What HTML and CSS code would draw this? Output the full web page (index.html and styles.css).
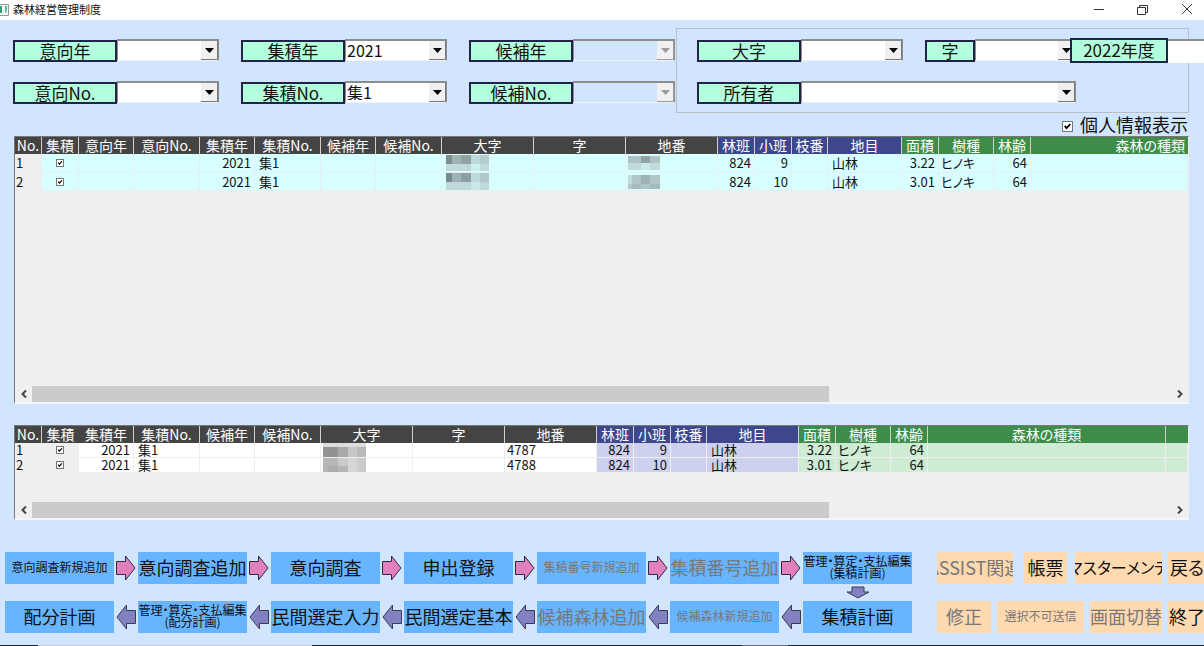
FILE: index.html
```html
<!DOCTYPE html>
<html lang="ja">
<head>
<meta charset="utf-8">
<title>森林経営管理制度</title>
<link rel="stylesheet" href="styles.css">
</head>
<body>
<svg class="defs" aria-hidden="true">
  <symbol id="arrow-right" viewBox="0 0 20 26"><path class="pink" d="M.5 6.500H9.500V1L19 13L9.500 25V19.500H.5Z"/></symbol>
  <symbol id="arrow-left" viewBox="0 0 20 26"><path class="violet" d="M19.500 6.500H10.500V1L1 13L10.500 25V19.500H19.500Z"/></symbol>
</svg>
<div class="app">
  <header class="titlebar">
    <svg class="app-icon" width="9" height="12" viewBox="0 0 9 12"><path d="M0 .5H8.500V11.500H0" fill="#f4f6f6" stroke="#8f9a9a"/><path d="M0 2H2V9H0Z" fill="#3d9c78"/><path d="M5 2H7V5L6 9H5Z" fill="#56b5a0"/></svg>
    <h1 class="title">森林経営管理制度</h1>
    <div class="window-buttons">
      <button type="button" aria-label="最小化"><svg width="12" height="12" viewBox="0 0 12 12"><path d="M1 5.500H11"/></svg></button>
      <button type="button" aria-label="元に戻す"><svg width="12" height="12" viewBox="0 0 12 12"><path d="M.5 3.500H8.500V10.500H.5ZM2.500 3.500V1.500H10.500V8.500H8.500"/></svg></button>
      <button type="button" aria-label="閉じる"><svg width="12" height="12" viewBox="0 0 12 12"><path d="M1 0L11 10M11 0L1 10"/></svg></button>
    </div>
  </header>

  <form class="filters">
    <div class="pair">
      <div class="field"><label for="ik-year">意向年</label><select id="ik-year"><option></option></select></div>
      <div class="field"><label for="ik-no">意向No.</label><select id="ik-no"><option></option></select></div>
    </div>
    <div class="pair">
      <div class="field"><label for="sh-year">集積年</label><select id="sh-year"><option>2021</option></select></div>
      <div class="field"><label for="sh-no">集積No.</label><select id="sh-no"><option>集1</option></select></div>
    </div>
    <div class="pair">
      <div class="field"><label for="kh-year">候補年</label><select id="kh-year" disabled><option></option></select></div>
      <div class="field"><label for="kh-no">候補No.</label><select id="kh-no" disabled><option></option></select></div>
    </div>
    <div class="place">
      <div class="place-row">
        <div class="field"><label for="oaza">大字</label><select id="oaza"><option></option></select></div>
        <div class="field short"><label for="aza">字</label><select id="aza"><option></option></select></div>
      </div>
      <div class="field owner"><label for="owner">所有者</label><select id="owner"><option></option></select></div>
    </div>
    <div class="fiscal"><label for="fiscal">2022年度</label><input id="fiscal" type="text"></div>
  </form>

  <div class="privacy"><input type="checkbox" id="personal" checked><label for="personal">個人情報表示</label></div>

  <section class="grid-panel main-list">
    <table>
      <colgroup><col class="w27"><col class="w37"><col class="w55"><col class="w66"><col class="w55"><col class="w66"><col class="w55"><col class="w66"><col class="w92"><col class="w92"><col class="w92"><col class="w37"><col class="w37"><col class="w36"><col class="w74"><col class="w37"><col class="w55"><col class="w37"><col></colgroup>
      <thead><tr><th>No.</th><th>集積</th><th>意向年</th><th>意向No.</th><th>集積年</th><th>集積No.</th><th>候補年</th><th>候補No.</th><th>大字</th><th>字</th><th>地番</th><th class="blue">林班</th><th class="blue">小班</th><th class="blue">枝番</th><th class="blue">地目</th><th class="green">面積</th><th class="green">樹種</th><th class="green">林齢</th><th class="green end">森林の種類</th></tr></thead>
      <tbody>
        <tr><td class="rowno">1</td><td class="tick"><input type="checkbox" aria-label="集積 1" checked></td><td></td><td></td><td class="num">2021</td><td>集1</td><td></td><td></td>
          <td><svg class="mosaic" width="43" height="16" viewBox="0 0 43 16"><path fill="#b4cccc" d="M0 0H43V9H0Z"/><path fill="#7f8d8d" d="M0 0H6V9H0Z"/><path fill="#9fb3b3" d="M6 0H15V9H6Z"/><path fill="#91a3a3" d="M15 0H25V9H15Z"/><path fill="#bddada" d="M25 0H34V9H25Z"/><path fill="#c0d9da" d="M0 9H43V16H0Z"/><path fill="#cdeeee" d="M25 9H34V16H25Z"/></svg></td>
          <td></td>
          <td class="flush"><svg class="mosaic" width="32" height="14" viewBox="0 0 32 14"><path fill="#aec4c4" d="M0 0H32V7H0Z"/><path fill="#8fa3a2" d="M13 0H22V7H13Z"/><path fill="#c0dada" d="M0 7H32V14H0Z"/><path fill="#cde9ea" d="M13 7H22V14H13Z"/></svg></td>
          <td class="num">824</td><td class="num">9</td><td></td><td>山林</td><td class="num">3.22</td><td class="flush">ヒノキ</td><td class="num">64</td><td></td></tr>
        <tr><td class="rowno">2</td><td class="tick"><input type="checkbox" aria-label="集積 2" checked></td><td></td><td></td><td class="num">2021</td><td>集1</td><td></td><td></td>
          <td><svg class="mosaic" width="43" height="17" viewBox="0 0 43 17"><path fill="#b0c8c8" d="M0 0H43V9H0Z"/><path fill="#7a8a89" d="M0 0H6V9H0Z"/><path fill="#9db2b2" d="M6 0H15V9H6Z"/><path fill="#8da09f" d="M15 0H25V9H15Z"/><path fill="#bddada" d="M25 0H34V9H25Z"/><path fill="#bfd9da" d="M0 9H43V17H0Z"/><path fill="#cae6e6" d="M25 9H34V17H25Z"/></svg></td>
          <td></td>
          <td class="flush"><svg class="mosaic" width="32" height="14" viewBox="0 0 32 14"><path fill="#afc6c6" d="M0 0H32V14H0Z"/><path fill="#c1dcdc" d="M0 0H4V9H0Z"/><path fill="#9eb3b3" d="M13 0H22V9H13Z"/><path fill="#a6bcbc" d="M4 9H13V14H4ZM22 9H32V14H22Z"/></svg></td>
          <td class="num">824</td><td class="num">10</td><td></td><td>山林</td><td class="num">3.01</td><td class="flush">ヒノキ</td><td class="num">64</td><td></td></tr>
      </tbody>
    </table>
    <div class="scrollbar"><button type="button" aria-label="左へ"><svg width="8" height="8" viewBox="0 0 8 8"><path d="M6 .5L2.500 4L6 7.500"/></svg></button><div class="track"><div class="thumb"></div></div><button type="button" aria-label="右へ"><svg width="8" height="8" viewBox="0 0 8 8"><path d="M2 .5L5.500 4L2 7.500"/></svg></button></div>
  </section>

  <section class="grid-panel sub-list">
    <table>
      <colgroup><col class="w27"><col class="w37"><col class="w55"><col class="w66"><col class="w55"><col class="w66"><col class="w92"><col class="w92"><col class="w92"><col class="w37"><col class="w37"><col class="w36"><col class="w92"><col class="w37"><col class="w55"><col class="w37"><col class="w238"><col></colgroup>
      <thead><tr><th>No.</th><th class="open">集積</th><th>集積年</th><th>集積No.</th><th>候補年</th><th>候補No.</th><th>大字</th><th>字</th><th>地番</th><th class="blue">林班</th><th class="blue">小班</th><th class="blue">枝番</th><th class="blue">地目</th><th class="green">面積</th><th class="green">樹種</th><th class="green">林齢</th><th class="green">森林の種類</th><th class="green end"></th></tr></thead>
      <tbody>
        <tr><td class="rowno">1</td><td class="tick"><input type="checkbox" aria-label="集積済 1" checked></td><td class="num">2021</td><td>集1</td><td></td><td></td>
          <td class="flush"><svg class="mosaic" width="43" height="14" viewBox="0 0 43 14"><path fill="#ddd" d="M0 0H43V4H0Z"/><path fill="#a9a9a9" d="M0 4H43V14H0Z"/><path fill="#929292" d="M0 4H15V14H0Z"/><path fill="#c6c6c6" d="M25 4H34V14H25Z"/><path fill="#b9b9b9" d="M34 4H43V14H34Z"/></svg></td>
          <td></td><td class="flush">4787</td><td class="num lilac">824</td><td class="num lilac">9</td><td class="lilac"></td><td class="lilac">山林</td><td class="num mint">3.22</td><td class="mint flush">ヒノキ</td><td class="num mint">64</td><td class="mint"></td><td class="mint"></td></tr>
        <tr><td class="rowno">2</td><td class="tick"><input type="checkbox" aria-label="集積済 2" checked></td><td class="num">2021</td><td>集1</td><td></td><td></td>
          <td class="flush"><svg class="mosaic" width="43" height="14" viewBox="0 0 43 14"><path fill="#b6b6b6" d="M0 0H43V14H0Z"/><path fill="#cbcbcb" d="M15 0H25V8H15ZM34 0H43V14H34Z"/><path fill="#d6d6d6" d="M25 0H34V14H25Z"/><path fill="#adadad" d="M5 8H15V14H5Z"/></svg></td>
          <td></td><td class="flush">4788</td><td class="num lilac">824</td><td class="num lilac">10</td><td class="lilac"></td><td class="lilac">山林</td><td class="num mint">3.01</td><td class="mint flush">ヒノキ</td><td class="num mint">64</td><td class="mint"></td><td class="mint"></td></tr>
      </tbody>
    </table>
    <div class="scrollbar"><button type="button" aria-label="左へ"><svg width="8" height="8" viewBox="0 0 8 8"><path d="M6 .5L2.500 4L6 7.500"/></svg></button><div class="track"><div class="thumb"></div></div><button type="button" aria-label="右へ"><svg width="8" height="8" viewBox="0 0 8 8"><path d="M2 .5L5.500 4L2 7.500"/></svg></button></div>
  </section>

  <footer class="actions">
    <div class="flow">
      <button type="button" class="small">意向調査新規追加</button>
      <svg class="arrow"><use href="#arrow-right"/></svg>
      <button type="button">意向調査追加</button>
      <svg class="arrow"><use href="#arrow-right"/></svg>
      <button type="button">意向調査</button>
      <svg class="arrow"><use href="#arrow-right"/></svg>
      <button type="button">申出登録</button>
      <svg class="arrow"><use href="#arrow-right"/></svg>
      <button type="button" class="small" disabled>集積番号新規追加</button>
      <svg class="arrow"><use href="#arrow-right"/></svg>
      <button type="button" disabled>集積番号追加</button>
      <svg class="arrow"><use href="#arrow-right"/></svg>
      <button type="button" class="small">管理・算定・支払編集<br>(集積計画)</button>

      <svg class="down" viewBox="0 0 26 13"><path class="violet" d="M7 1H19V6H24L13 12L2 6H7Z"/></svg>

      <button type="button">配分計画</button>
      <svg class="arrow"><use href="#arrow-left"/></svg>
      <button type="button" class="small">管理・算定・支払編集<br>(配分計画)</button>
      <svg class="arrow"><use href="#arrow-left"/></svg>
      <button type="button">民間選定入力</button>
      <svg class="arrow"><use href="#arrow-left"/></svg>
      <button type="button">民間選定基本</button>
      <svg class="arrow"><use href="#arrow-left"/></svg>
      <button type="button" disabled>候補森林追加</button>
      <svg class="arrow"><use href="#arrow-left"/></svg>
      <button type="button" class="small" disabled>候補森林新規追加</button>
      <svg class="arrow"><use href="#arrow-left"/></svg>
      <button type="button">集積計画</button>
    </div>
    <div class="tools">
      <div class="tool-row upper">
        <button type="button" class="assist" disabled>ASSIST関連</button>
        <button type="button" class="report">帳票</button>
        <button type="button" class="master">マスターメンテ</button>
        <button type="button" class="edge">戻る</button>
      </div>
      <div class="tool-row">
        <button type="button" class="fix" disabled>修正</button>
        <button type="button" class="send small" disabled>選択不可送信</button>
        <button type="button" class="switch" disabled>画面切替</button>
        <button type="button" class="edge">終了</button>
      </div>
    </div>
  </footer>
  <div class="taskbar-edge"></div>
</div>
</body>
</html>
```
FILE: styles.css
```css
* { box-sizing: border-box; }

body {
  margin: 0;
  background: #d1e5ff;
  color: #111;
  font-family: "Noto Sans CJK JP", sans-serif;
  font-size: 14px;
  font-feature-settings: "palt";
  overflow: hidden;
}

button, input, select { font: inherit; font-feature-settings: inherit; color: inherit; }

.defs { display: none; }
.pink { fill: #e27fbd; stroke: #2c2c3c; }
.violet { fill: #8181c2; stroke: #3a3a55; }

.app { display: flex; flex-direction: column; min-height: 100vh; }

/* title bar */
.titlebar { display: flex; align-items: center; height: 20px; background: #fff; flex: none; }
.app-icon { flex: none; margin-right: 4px; }
.title { margin: 0; padding-bottom: 2px; font-size: 11px; line-height: 16px; font-weight: 400; }
.window-buttons { display: flex; gap: 32px; margin-left: auto; padding-right: 11px; }
.window-buttons button { display: flex; border: 0; padding: 0; background: none; }
.window-buttons svg { fill: none; stroke: #333; }

/* search conditions */
.filters { display: flex; position: relative; padding: 8px 15px 0 13px; }
.pair { width: 206px; margin-right: 22px; padding-top: 11px; }
.pair:nth-child(3) { margin-right: 1px; }
.field { display: flex; align-items: flex-start; width: 206px; height: 24px; }
.field label, .fiscal label {
  flex: none;
  width: 104px;
  height: 22px;
  margin-top: 1px;
  border: 2px solid #1f2348;
  background: #b3ffdd;
  font-size: 17px;
  line-height: 17px;
  text-align: center;
}
.field + .field, .owner { margin-top: 18px; }
.field select {
  appearance: none;
  flex: 1;
  min-width: 0;
  height: 22px;
  border: 1px solid #8d8d8d;
  border-width: 2px 1px 1px 1px;
  border-bottom-color: #f3f3f3;
  border-radius: 0;
  padding: 0 18px 2px 1px;
  font-size: 16px;
  line-height: 16px;
  opacity: 1;
  background: #fff url("data:image/svg+xml,%3Csvg xmlns='http://www.w3.org/2000/svg' width='17' height='19'%3E%3Cpath fill='%23f0f0f0' d='M0 0H17V19H0Z'/%3E%3Cpath fill='none' stroke='%23777' d='M16.500 0V18.500H0'/%3E%3Cpath d='M4 7H13L8.500 12Z'/%3E%3C/svg%3E") no-repeat right center;
}
.field select:disabled {
  background-color: #d1e5ff;
  background-image: url("data:image/svg+xml,%3Csvg xmlns='http://www.w3.org/2000/svg' width='17' height='19'%3E%3Cpath fill='%23f0f0f0' d='M0 0H17V19H0Z'/%3E%3Cpath fill='none' stroke='%23999' d='M16.500 0V18.500H0'/%3E%3Cpath fill='%23999' d='M4 7H13L8.500 12Z'/%3E%3C/svg%3E");
}
.place {
  flex: 1;
  height: 85px;
  border: 1px solid #b9c0c8;
  padding: 10px 0 0 20px;
}
.place-row { display: flex; gap: 22px; }
.place-row .field + .field { margin-top: 0; }
.field.short { width: 151px; }
.field.short label { width: 50px; }
.field.owner { width: 379px; }
.fiscal { display: flex; position: absolute; right: 0; top: 18px; }
.fiscal label { width: 98px; height: 25px; margin: 0; line-height: 20px; }
.fiscal input { width: 36px; height: 24px; margin-top: 1px; border: 0; border-top: 2px solid #8d8d8d; padding: 0; background: #fff; }

.privacy { display: flex; justify-content: flex-end; align-items: center; gap: 7px; height: 20px; margin-top: 3px; padding-right: 16px; font-size: 18px; }
.privacy input { margin-bottom: 2px; }
.privacy label { padding-bottom: 4px; line-height: 18px; }

input[type="checkbox"] {
  appearance: none;
  width: 11px;
  height: 11px;
  margin: 0;
  border: 1px solid #777;
  background: #fff;
}
input[type="checkbox"]:checked {
  background: #fff url("data:image/svg+xml,%3Csvg xmlns='http://www.w3.org/2000/svg' viewBox='0 0 8 8'%3E%3Cpath fill='none' stroke='%23000' stroke-width='1.600' d='M1.500 3.500L3.200 5.500L6.500 1.800'/%3E%3C/svg%3E") center / 100% no-repeat;
}

/* list panels */
.grid-panel {
  display: flex;
  flex-direction: column;
  margin: 0 15px 0 14px;
  border: 1px solid #777;
  border-right-color: #eee;
  border-bottom: 2px solid #f6f6f6;
  background: #efefef;
}
.main-list { flex: 1; }
.sub-list { margin-top: 21px; height: 95px; flex: none; }
.grid-panel table { table-layout: fixed; width: 100%; border-collapse: separate; border-spacing: 0; line-height: 14px; }
.w27 { width: 27px; }
.w36 { width: 36px; }
.w37 { width: 37px; }
.w55 { width: 55px; }
.w66 { width: 66px; }
.w74 { width: 74px; }
.w92 { width: 92px; }
.w238 { width: 238px; }

th {
  height: 17px;
  padding: 0 0 2px;
  border-right: 1px solid #d0d0d0;
  background: #444;
  color: #fff;
  font-weight: 400;
  white-space: nowrap;
}
th.blue { background: #3e478c; }
th.green { background: #3d8d49; }
th.open, th.end { border-right: 0; }
.main-list th.end { text-align: right; padding-right: 3px; }

td {
  height: 18px;
  padding: 0 0 0 4px;
  border-right: 1px solid #e6f0f0;
  border-bottom: 1px solid #e6f0f0;
  background: #d8ffff;
  font-size: 13px;
  white-space: nowrap;
}
.main-list tbody tr:first-child td { height: 19px; }
.sub-list td { height: 15px; background: #fff; border-color: #eee; }
td.num { padding: 0 3px 0 0; text-align: right; }
td.flush { padding-left: 2px; }
td.rowno { padding-left: 1px; background: #efefef; border-color: #efefef; }
td.tick { padding: 0; text-align: center; line-height: 0; }
.sub-list td.tick { background: #efefef; border-color: #efefef; }
td.tick input { width: 8px; height: 8px; }
.sub-list td.lilac { background: #cdd0ee; }
.sub-list td.mint { background: #cdecd3; }
.mosaic { display: block; }

.scrollbar { display: flex; height: 16px; margin-top: auto; }
.scrollbar button { display: flex; align-items: center; justify-content: center; width: 17px; padding: 0; border: 0; background: none; }
.scrollbar svg { fill: none; stroke: #444; stroke-width: 2; }
.track { flex: 1; }
.thumb { width: 70%; height: 100%; background: #cbcbcb; }

/* process buttons */
.actions { display: flex; margin-top: 32px; padding-left: 5px; }
.flow { flex: none; display: grid; grid-template-columns: repeat(6, 109px 24px) 109px; grid-template-rows: 32px 17px 32px; align-items: center; }
.actions button {
  display: block;
  height: 32px;
  padding: 0 0 2px;
  border: 0;
  overflow: hidden;
  font-size: 18px;
  line-height: 30px;
  white-space: nowrap;
  text-align: center;
  color: #111;
}
.flow button { background: #68b5ff; }
.actions button.small { font-size: 12px; line-height: 12px; }
.actions button:disabled { color: #787878; }
.arrow { justify-self: center; width: 20px; height: 26px; }
.down { grid-column: 1 / -1; justify-self: end; width: 26px; height: 13px; margin-right: 41px; }

.tools { flex: 1; display: flex; flex-direction: column; gap: 17px; margin-left: 25px; min-width: 0; overflow: hidden; }
.tool-row { display: flex; gap: 6px; }
.tools button { flex: none; display: flex; align-items: center; justify-content: center; background: #ffd9b0; }
.tools .assist { width: 76px; margin-right: 5px; }
.tools .report { width: 43px; margin-right: 2px; }
.tools .master { width: 87px; font-size: 16px; }
.tools .fix { width: 54px; }
.tools .send { width: 87px; }
.tools .switch { width: 72px; }
.tools .edge { width: 38px; }

.taskbar-edge { height: 1px; margin-top: 12px; background: linear-gradient(to right, #1c2a3c 38px, #c4ccd4 38px 312px, #1c2a3c 312px 742px, #67717d 742px 788px, #1c2a3c 788px); }
```
